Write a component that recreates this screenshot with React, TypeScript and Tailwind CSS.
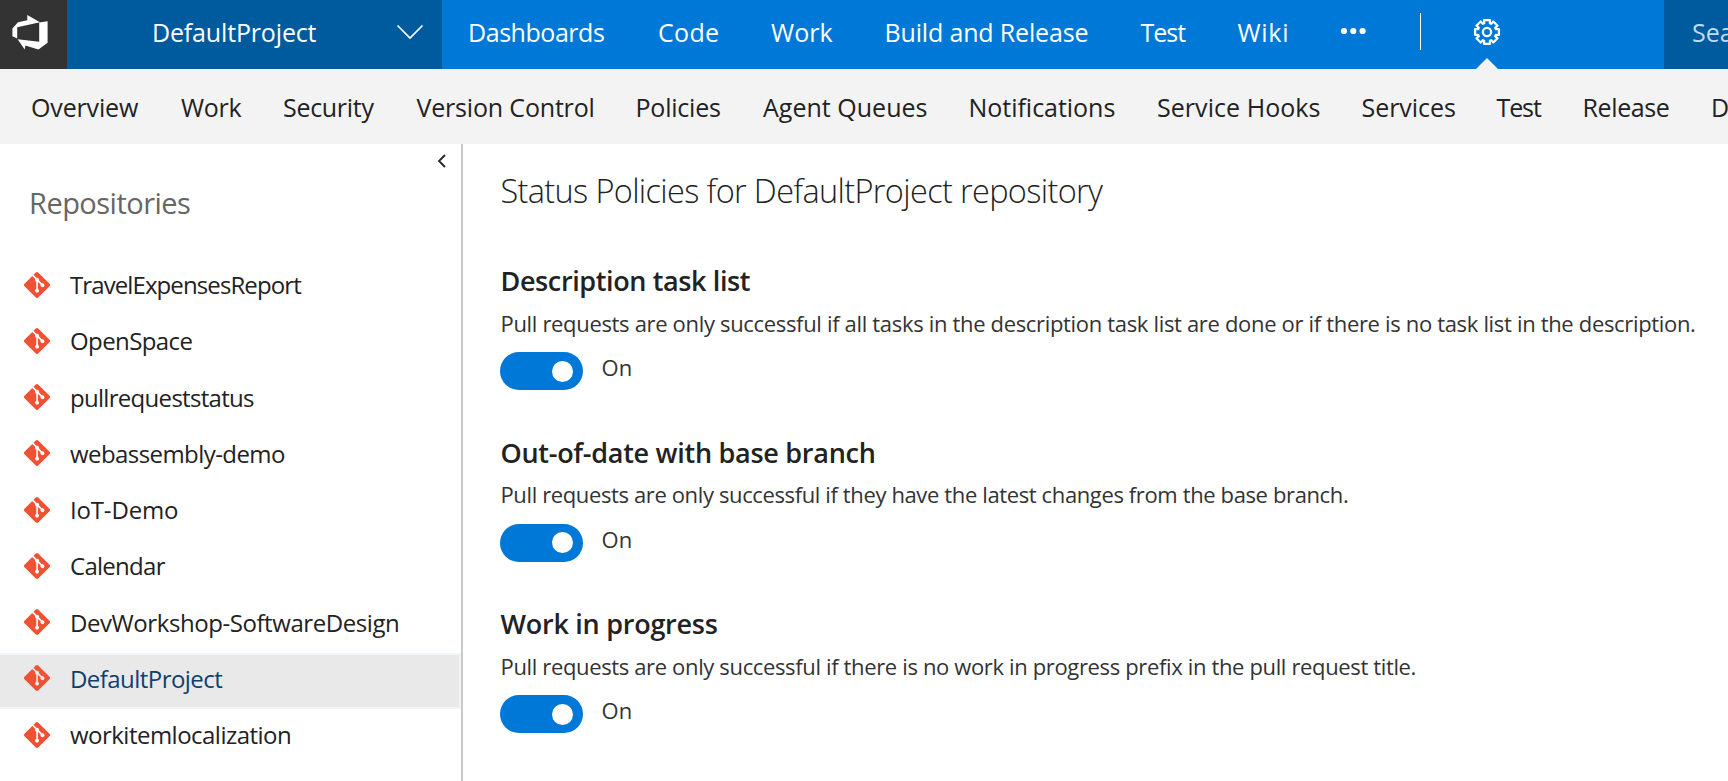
import { SiGit } from 'react-icons/si';

const mainTabs = [
  { label: 'Dashboards', box: 'w-[190px] tracking-[-0.45px]' },
  { label: 'Code', box: 'w-[113px] tracking-[0.3px]' },
  { label: 'Work', box: 'w-[113.5px] tracking-[0.05px]' },
  { label: 'Build and Release', box: 'w-[256px] tracking-[-0.16px]' },
  { label: 'Test', box: 'w-[97px] tracking-[-1px]' },
  { label: 'Wiki', box: 'w-[102px] tracking-[0.7px]' },
];

const subTabs = [
  { label: 'Overview', box: 'w-[150px] tracking-[-0.15px]' },
  { label: 'Work', box: 'w-[102px] tracking-[-0.3px]' },
  { label: 'Security', box: 'w-[133.5px] tracking-[-0.3px]' },
  { label: 'Version Control', box: 'w-[219px] tracking-[-0.18px]' },
  { label: 'Policies', box: 'w-[127.5px] tracking-[-0.22px]' },
  { label: 'Agent Queues', box: 'w-[205.5px] tracking-[0.02px]' },
  { label: 'Notifications', box: 'w-[188.5px] tracking-[-0.03px]' },
  { label: 'Service Hooks', box: 'w-[204.5px] tracking-[0.05px]' },
  { label: 'Services', box: 'w-[135px] tracking-[-0.04px]' },
  { label: 'Test', box: 'w-[86px] tracking-[-1.1px]' },
  { label: 'Release', box: 'w-[128.5px] tracking-[-0.38px]' },
  { label: 'D', box: 'w-[20px]' },
];

const repositories = [
  { name: 'TravelExpensesReport', tracking: 'tracking-[-0.9px]' },
  { name: 'OpenSpace', tracking: 'tracking-[-0.6px]' },
  { name: 'pullrequeststatus', tracking: 'tracking-[-0.7px]' },
  { name: 'webassembly-demo', tracking: 'tracking-[-0.57px]' },
  { name: 'IoT-Demo', tracking: 'tracking-[-0.17px]' },
  { name: 'Calendar', tracking: 'tracking-[-0.72px]' },
  { name: 'DevWorkshop-SoftwareDesign', tracking: 'tracking-[-0.43px]' },
  { name: 'DefaultProject', tracking: 'tracking-[-0.55px]', selected: true },
  { name: 'workitemlocalization', tracking: 'tracking-[-0.52px]' },
];

const policies = [
  {
    title: 'Description task list',
    titleTracking: 'tracking-[-0.38px]',
    text: 'Pull requests are only successful if all tasks in the description task list are done or if there is no task list in the description.',
    tracking: 'tracking-[-0.328px]',
  },
  {
    title: 'Out-of-date with base branch',
    titleTracking: 'tracking-[-0.28px]',
    text: 'Pull requests are only successful if they have the latest changes from the base branch.',
    tracking: 'tracking-[-0.375px]',
  },
  {
    title: 'Work in progress',
    titleTracking: 'tracking-[-0.26px]',
    text: 'Pull requests are only successful if there is no work in progress prefix in the pull request title.',
    tracking: 'tracking-[-0.355px]',
  },
];

function gearOutline(): string {
  const points: string[] = [];
  for (let i = 0; i < 8; i++) {
    const corners: [number, number][] = [[-18, 9.2], [-14, 12.3], [14, 12.3], [18, 9.2]];
    for (const [offset, radius] of corners) {
      const angle = ((i * 45 + offset - 90) * Math.PI) / 180;
      points.push(`${(14 + radius * Math.cos(angle)).toFixed(2)} ${(14 + radius * Math.sin(angle)).toFixed(2)}`);
    }
  }
  return `M${points.join('L')}Z`;
}

function Logo() {
  return (
    <svg viewBox="0 0 36 35" className="h-[35px] w-9" fill="#fff">
      <path d="M15.3 0 28 7.2 5.2 12.2V23.6L.4 21.3V13.4L6 7.2 15.3 5.3Z" />
      <path d="M27.2 7.6 35.6 6.3V27.8L26.4 34.5 13.4 30.6 12.7 34.5 5.6 24.3 27.2 26.8Z" />
    </svg>
  );
}

function Toggle() {
  return (
    <div className="flex h-[38px] w-[83px] items-center justify-end rounded-full bg-[#0078d7] pr-[10px]">
      <div className="size-[21px] rounded-full bg-white" />
    </div>
  );
}

export default function App() {
  return (
    <div className="flex h-[781px] w-[1728px] flex-col overflow-hidden bg-white font-['Open_Sans','Noto_Sans',sans-serif] text-[#222]">
      <header className="flex h-[69px] shrink-0 bg-[#0078d7] text-[25px] whitespace-nowrap text-white">
        <div className="flex w-[67px] shrink-0 bg-[#333] pt-[14.5px] pl-3">
          <Logo />
        </div>
        <div className="flex w-[375px] shrink-0 justify-between bg-[#005a9e] pr-[18px] pl-[85px]">
          <span className="leading-[65px] tracking-[-0.16px]">DefaultProject</span>
          <svg viewBox="0 0 28 16" className="mt-[24px] h-4 w-7" fill="none" stroke="#fff" strokeWidth="1.7">
            <path d="M1.5 1.5 14 14 26.5 1.5" />
          </svg>
        </div>
        <nav className="flex shrink-0 pl-[26px] leading-[65px]">
          {mainTabs.map((tab) => (
            <div key={tab.label} className={tab.box}>{tab.label}</div>
          ))}
        </nav>
        <svg viewBox="0 0 26 8" className="mt-[27px] h-2 w-[26px] shrink-0" fill="#fff">
          <circle cx="4" cy="4" r="3.1" />
          <circle cx="13.3" cy="4" r="3.1" />
          <circle cx="22.6" cy="4" r="3.1" />
        </svg>
        <div className="mt-[13px] ml-[54.5px] h-[37px] w-px shrink-0 bg-white" />
        <div className="ml-[52px] flex w-7 shrink-0 flex-col items-center justify-between pt-[18px]">
          <svg viewBox="0 0 28 28" className="size-7" fill="none" stroke="#fff" strokeWidth="2.2" strokeLinejoin="round">
            <path d={gearOutline()} />
            <circle cx="14" cy="14" r="4.1" />
          </svg>
          <svg viewBox="0 0 22 11" className="h-[11px] w-[22px]" fill="#f3f3f3">
            <path d="M11 0 22 11H0Z" />
          </svg>
        </div>
        <div className="ml-auto w-16 overflow-hidden bg-[#005a9e] pl-7 leading-[65px] text-[#bfdcf3]">Search</div>
      </header>

      <nav className="flex h-[75px] shrink-0 bg-[#f3f3f3] pl-[31px] text-[25px] leading-[77px] whitespace-nowrap">
        {subTabs.map((tab) => (
          <div key={tab.label} className={`shrink-0 ${tab.box}`}>{tab.label}</div>
        ))}
      </nav>

      <div className="flex min-h-0 flex-1">
        <aside className="flex w-[463px] shrink-0 flex-col border-r-2 border-[#c8c8c8]">
          <div className="flex h-[33px] justify-end pt-[10px] pr-[14px]">
            <svg viewBox="0 0 10 14" className="h-[14px] w-[10px]" fill="none" stroke="#222" strokeWidth="1.8">
              <path d="M8 1 2 7 8 13" />
            </svg>
          </div>
          <h2 className="mb-[30px] h-[52px] pl-[29px] text-[29px] leading-[52px] tracking-[-0.52px] text-[#666]">Repositories</h2>
          <ul>
            {repositories.map((repo) => (
              <li
                key={repo.name}
                className={`flex h-[56.25px] items-center gap-[20px] border-y-2 border-r-2 pb-[5px] pl-6 text-[24px] leading-[40px] ${
                  repo.selected ? 'border-[#eff5fa] bg-[#e9e9e9] text-[#0f3f6f]' : 'border-transparent'
                }`}
              >
                <SiGit className="size-[26px] text-[#f05133]" />
                <span className={`pt-px ${repo.tracking}`}>{repo.name}</span>
              </li>
            ))}
          </ul>
        </aside>

        <main className="flex-1 pt-[23px] pl-[37.5px] whitespace-nowrap">
          <h1 className="mb-[47px] h-12 text-[32.5px] leading-[48px] font-light tracking-[-0.65px]">
            Status Policies for DefaultProject repository
          </h1>
          {policies.map((policy) => (
            <section key={policy.title} className="h-[171.6px]">
              <h3 className={`h-[37px] text-[27px] leading-[37px] font-semibold ${policy.titleTracking}`}>{policy.title}</h3>
              <p className={`mt-[6.5px] h-[34px] text-[22px] leading-[34px] text-[#333] ${policy.tracking}`}>{policy.text}</p>
              <div className="mt-[12.5px] -ml-[0.5px] flex gap-[18.5px] text-[22px] leading-[31.5px] text-[#333]">
                <Toggle />
                <span className="tracking-[0.1px]">On</span>
              </div>
            </section>
          ))}
        </main>
      </div>
    </div>
  );
}
